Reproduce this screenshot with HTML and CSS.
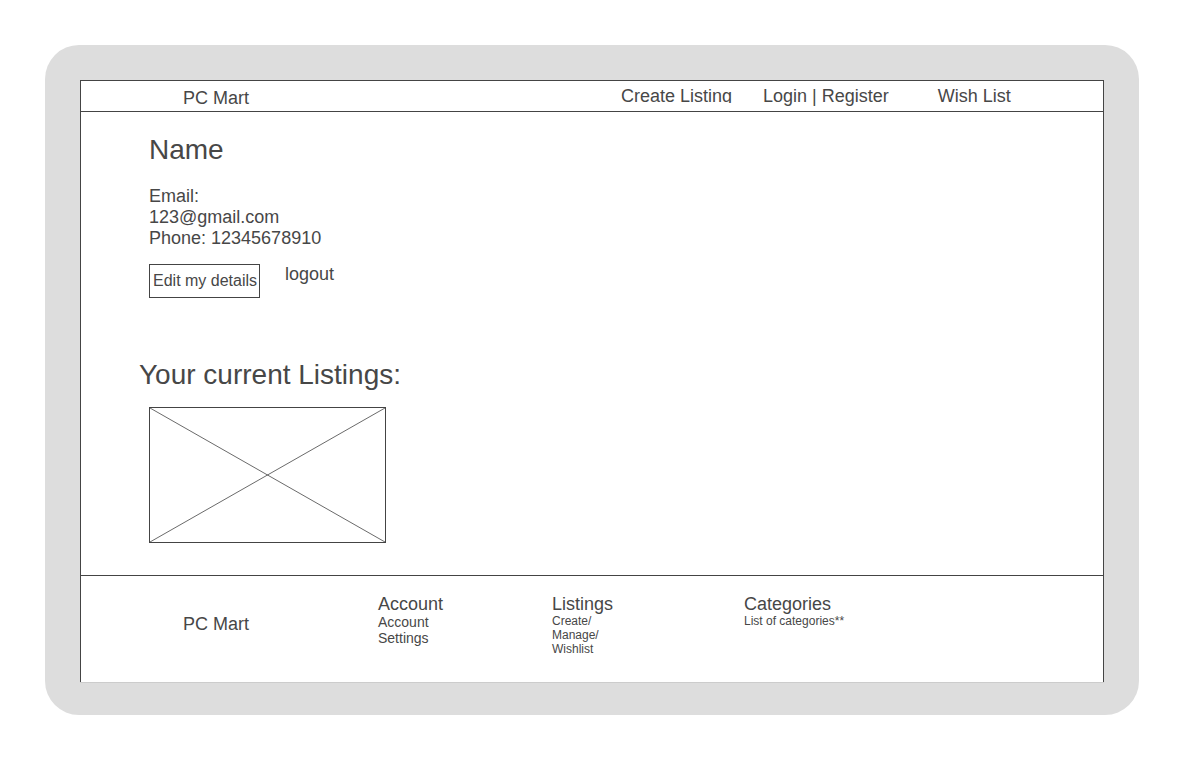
FILE: index.html
```html
<!DOCTYPE html>
<html lang="en">
<head>
    <meta charset="UTF-8">
    <meta name="viewport" content="width=device-width, initial-scale=1.0">
    <title>PC Mart - Account</title>
    <link rel="stylesheet" href="styles.css">
</head>
<body>

    <div class="device">
        <div class="screen">

            <!-- Шапка -->
            <div class="header">
                <div class="logo">PC Mart</div>
                <div class="nav">
                    <a class="nav-item nav-create" href="#">Create Listing</a>
                    <a class="nav-item nav-login" href="#">Login | Register</a>
                    <a class="nav-item nav-wish" href="#">Wish List</a>
                </div>
            </div>

            <!-- Профиль -->
            <div class="main">
                <h1 class="name">Name</h1>
                <div class="info">
                    Email: 123@gmail.com<br>
                    Phone: 12345678910
                </div>
                <div class="actions">
                    <button class="button">Edit my details</button>
                    <a class="logout" href="#">logout</a>
                </div>

                <h2 class="listings-title">Your current Listings:</h2>
                <div class="listing">
                    <svg width="237" height="136" viewBox="0 0 237 136">
                        <rect x="0.5" y="0.5" width="236" height="135" fill="#fff" stroke="#444"/>
                        <line x1="1" y1="1" x2="236" y2="135" stroke="#444" stroke-width="0.8"/>
                        <line x1="236" y1="1" x2="1" y2="135" stroke="#444" stroke-width="0.8"/>
                    </svg>
                </div>
            </div>

            <!-- Подвал -->
            <div class="footer">
                <div class="footer-logo">PC Mart</div>
                <div class="footer-col col-account">
                    <div class="footer-title">Account</div>
                    <div class="footer-text">Account Settings</div>
                </div>
                <div class="footer-col col-listings">
                    <div class="footer-title">Listings</div>
                    <div class="footer-small">Create/ Manage/ Wishlist</div>
                </div>
                <div class="footer-col col-categories">
                    <div class="footer-title">Categories</div>
                    <div class="footer-small">List of categories**</div>
                </div>
            </div>

        </div>
    </div>

</body>
</html>
```

FILE: styles.css
```css
body {
    font-family: "Liberation Sans", Arial, sans-serif;
    margin: 0;
    padding: 45px;
    background-color: #fff;
    color: #474747;
}
a {
    color: #474747;
    text-decoration: none;
}
.device {
    width: 1094px;
    height: 670px;
    box-sizing: border-box;
    padding: 35px;
    background-color: #ddd;
    border-radius: 34px;
}
.screen {
    height: 602px;
    box-sizing: border-box;
    display: flex;
    flex-direction: column;
    background: white;
    border: 1px solid #444;
    border-bottom: none;
    box-shadow: 0 1px 0 #ccc;
}
.header {
    height: 31px;
    box-sizing: border-box;
    display: flex;
    align-items: flex-start;
    border-bottom: 1px solid #444;
    font-size: 18px;
}
.logo {
    width: 438px;
    padding-left: 102px;
    padding-top: 6px;
    line-height: 22px;
}
.nav {
    display: flex;
    align-items: flex-start;
}
.nav-item {
    display: block;
    margin-top: 6px;
    line-height: 18px;
}
.nav-create {
    height: 16px;
    overflow: hidden;
}
.nav-login {
    margin-left: 31px;
}
.nav-wish {
    margin-left: 49px;
}
.main {
    flex: 1;
    padding: 22px 0 0 68px;
}
.name {
    margin: 0;
    font-size: 28px;
    font-weight: normal;
    line-height: 32px;
}
.info {
    width: 180px;
    margin-top: 20px;
    font-size: 18px;
    line-height: 21px;
}
.actions {
    display: flex;
    align-items: flex-start;
    margin-top: 15px;
}
.button {
    width: 111px;
    height: 34px;
    box-sizing: border-box;
    padding: 0 0 0 3px;
    text-align: left;
    font-family: inherit;
    font-size: 16px;
    color: #474747;
    background: white;
    border: 1px solid #444;
    border-radius: 0;
    cursor: pointer;
}
.logout {
    margin-left: 25px;
    font-size: 18px;
    line-height: 21px;
}
.listings-title {
    margin: 61px 0 0 -10px;
    font-size: 28px;
    font-weight: normal;
    line-height: 32px;
}
.listing {
    margin-top: 16px;
    height: 136px;
}
.listing svg {
    display: block;
}
.footer {
    height: 107px;
    box-sizing: border-box;
    display: flex;
    align-items: flex-start;
    padding: 18px 0 0 102px;
    border-top: 1px solid #444;
}
.footer-logo {
    width: 195px;
    margin-top: 20px;
    font-size: 18px;
    line-height: 21px;
}
.footer-col {
    display: flex;
    flex-direction: column;
}
.col-account {
    width: 174px;
}
.col-listings {
    width: 192px;
}
.footer-title {
    font-size: 18px;
    line-height: 21px;
}
.footer-text {
    width: 60px;
    margin-top: -1px;
    font-size: 14px;
    line-height: 16px;
}
.footer-small {
    max-width: 120px;
    margin-top: -1px;
    font-size: 12px;
    line-height: 14px;
}
.col-listings .footer-small {
    width: 60px;
}
```
